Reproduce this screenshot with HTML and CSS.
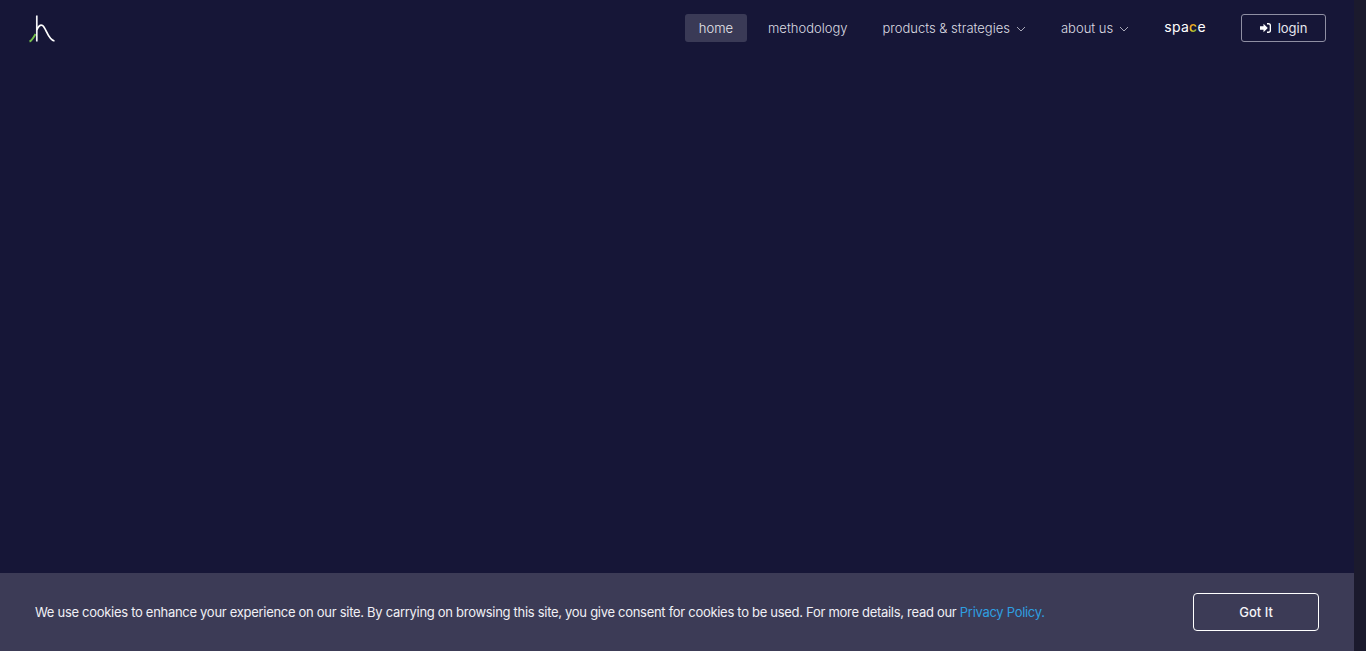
FILE: index.html
```html
<!DOCTYPE html>
<html lang="en">
<head>
<meta charset="utf-8">
<title>home</title>
<link rel="stylesheet" href="styles.css">
</head>
<body>
<div class="page">
  <header class="topbar">
    <a class="logo" href="#" aria-label="logo">
      <svg width="28" height="28" viewBox="0 0 28 28" fill="none">
        <path d="M1.5 26.5C4 25.5 5.5 22.5 7.5 19" stroke="#74c04c" stroke-width="1.9"/>
        <path d="M8.8 0.5V26.5" stroke="#f4f4f8" stroke-width="1.7"/>
        <path d="M8.8 15C10.5 10.5 12.5 9.5 14.5 10.5C18 12.5 20 25 26.5 26" stroke="#ffffff" stroke-width="1.7"/>
      </svg>
    </a>
    <nav class="nav">
      <a class="nav-item active" href="#">home</a>
      <a class="nav-item" href="#">methodology</a>
      <a class="nav-item" href="#">products &amp; strategies
        <svg class="chev" width="10" height="6" viewBox="0 0 10 6" fill="none"><path d="M1 1L5 5L9 1" stroke="#a9a9b8" stroke-width="1"/></svg>
      </a>
      <a class="nav-item" href="#">about us
        <svg class="chev" width="10" height="6" viewBox="0 0 10 6" fill="none"><path d="M1 1L5 5L9 1" stroke="#a9a9b8" stroke-width="1"/></svg>
      </a>
      <a class="nav-item space" href="#">spa<span class="c">c</span>e</a>
      <a class="login" href="#">
        <svg width="11" height="10" viewBox="0 0 11 10"><path d="M0 3.2H3.5V0.8L7.8 5L3.5 9.2V6.8H0Z" fill="#fff"/><path d="M7 0.8H8.5C9.8 0.8 10.4 1.6 10.4 2.7V7.3C10.4 8.4 9.8 9.2 8.5 9.2H7" fill="none" stroke="#fff" stroke-width="1.4"/></svg>
        login
      </a>
    </nav>
  </header>
  <section class="cookie">
    <p class="cookie-text">We use cookies to enhance your experience on our site. By carrying on browsing this site, you give consent for cookies to be used. For more details, read our <a href="#">Privacy Policy.</a></p>
    <button class="got" type="button">Got It</button>
  </section>
</div>
<div class="scrollbar"></div>
</body>
</html>
```
FILE: styles.css
```css
* { box-sizing: border-box; }
html, body { height: 100%; }
body {
  margin: 0;
  height: 651px;
  overflow: hidden;
  display: flex;
  background: #161637;
  font-family: "Inter", "Liberation Sans", sans-serif;
}
a { text-decoration: none; color: inherit; }
.page {
  width: 1354px;
  height: 651px;
  display: flex;
  flex-direction: column;
  justify-content: space-between;
}
.scrollbar { width: 12px; background: #1b1a2d; }
.topbar {
  display: flex;
  align-items: flex-start;
  justify-content: space-between;
  padding: 14px 28px 0 28px;
}
.logo { display: block; margin-top: 1px; height: 28px; }
.nav { display: flex; align-items: center; gap: 7px; }
.nav-item {
  display: flex;
  align-items: center;
  height: 28px;
  padding: 0 14px;
  border-radius: 3px;
  font-size: 13px;
  font-weight: 300;
  color: #dcdce2;
  white-space: nowrap;
}
.active { background: #3a3a56; color: #e8e8ec; }
.chev { margin-left: 6px; margin-top: 2px; }
.space {
  color: #fff;
  font-size: 14px;
  font-weight: 400;
  letter-spacing: 0.3px;
  margin-top: -3px;
  margin-right: 14px;
}
.space .c {
  background: linear-gradient(135deg, #f0792c 20%, #f0c820 55%, #58b848 85%);
  background-clip: text;
  -webkit-background-clip: text;
  color: transparent;
  font-weight: 600;
}
.login {
  display: flex;
  align-items: center;
  justify-content: center;
  gap: 7px;
  width: 85px;
  height: 28px;
  border: 1px solid #8f8fa3;
  border-radius: 3px;
  font-size: 13px;
  font-weight: 400;
  color: #e6e6ee;
}
.cookie {
  height: 78px;
  background: #3c3b56;
  display: flex;
  align-items: center;
  justify-content: space-between;
  padding: 0 35px;
}
.cookie-text {
  margin: 0;
  font-size: 13px;
  letter-spacing: -0.293px;
  color: #f0f0f5;
  white-space: nowrap;
}
.cookie-text a { color: #2f9fe0; }
.got {
  width: 126px;
  height: 38px;
  background: transparent;
  border: 1px solid #fff;
  border-radius: 4px;
  color: #f4f4f8;
  font-family: inherit;
  font-size: 13px;
  font-weight: 500;
}
```
